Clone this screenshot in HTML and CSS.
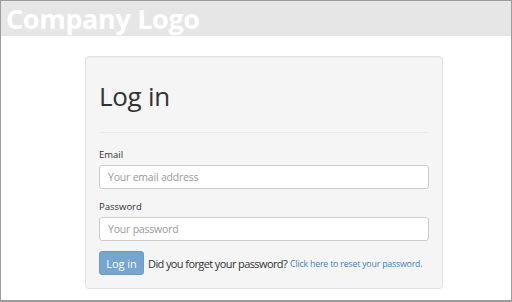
FILE: index.html
```html
<!DOCTYPE html>
<html lang="en">
  <head>
    <meta charset="UTF-8" />
    <meta name="viewport" content="width=device-width, initial-scale=1" />
    <title>Log in</title>
    <link rel="stylesheet" href="styles.css">
  </head>

  <body>
    <div class="frame">
      <div class="topBar">
        <span class="logo">Company Logo</span>
      </div>

      <div class="loginWell">
        <h1 class="loginTitle">Log in</h1>
        <hr class="divider" />

        <form name="login" class="loginForm">
          <label class="fieldLabel" for="email">Email</label>
          <input id="email" class="field" type="text" placeholder="Your email address" />

          <label class="fieldLabel" for="password">Password</label>
          <input id="password" class="field" type="password" placeholder="Your password" />

          <div class="actions">
            <button class="loginBtn" type="button" disabled>Log in</button>
            <span class="forgot">Did you forget your password?</span>
            <a class="resetLink" href="#">Click here to reset your password.</a>
          </div>
        </form>
      </div>
    </div>
  </body>
</html>
```

FILE: styles.css
```css
*,
*:before,
*:after {
  margin: 0;
  padding: 0;
  box-sizing: border-box;
}

html,
body {
  font-family: "Open Sans", sans-serif;
  background-color: #fff;
}

.frame {
  width: 512px;
  height: 302px;
  border: 1px solid #9c9c9c;
  border-bottom-width: 2px;
  overflow: hidden;
}

.topBar {
  height: 35px;
  padding-left: 5px;
  display: flex;
  align-items: center;
  background-color: #e6e6e6;
}

.logo {
  font-size: 27px;
  font-weight: 700;
  color: #fff;
  letter-spacing: -0.35px;
  line-height: 1;
}

.loginWell {
  width: 358px;
  margin: 20px 0 0 84px;
  padding: 25px 13px 13px 13px;
  background-color: #f5f5f5;
  border: 1px solid #e3e3e3;
  border-radius: 4px;
  box-shadow: inset 0 1px 1px rgba(0, 0, 0, 0.03);
}

.loginTitle {
  font-size: 26px;
  font-weight: 400;
  letter-spacing: -0.3px;
  line-height: 29px;
  color: #333;
}

.divider {
  border: 0;
  border-top: 1px solid #ebebeb;
  margin: 21px 0 14px 0;
}

.loginForm {
  display: flex;
  flex-direction: column;
}

.fieldLabel {
  font-size: 9.5px;
  color: #333;
  line-height: 15px;
  margin-bottom: 3px;
}

.field {
  height: 24px;
  padding: 0 8px;
  font-family: "Open Sans", sans-serif;
  font-size: 10.5px;
  letter-spacing: -0.2px;
  color: #555;
  background-color: #fff;
  border: 1px solid #ccc;
  border-radius: 3px;
  margin-bottom: 10px;
}

.field::placeholder {
  color: #999;
}

.actions {
  display: flex;
  align-items: center;
  white-space: nowrap;
}

.loginBtn {
  flex: none;
  width: 45px;
  height: 24px;
  font-family: "Open Sans", sans-serif;
  font-size: 11px;
  color: #fff;
  background-color: #76a5cf;
  border: 1px solid #6d9cc6;
  border-radius: 3px;
  margin-right: 4px;
}

.forgot {
  font-size: 11px;
  letter-spacing: -0.6px;
  color: #333;
  margin-right: 3px;
}

.resetLink {
  font-size: 8.8px;
  letter-spacing: -0.2px;
  color: #3d7fc0;
  text-decoration: none;
  padding-top: 1px;
}
```
